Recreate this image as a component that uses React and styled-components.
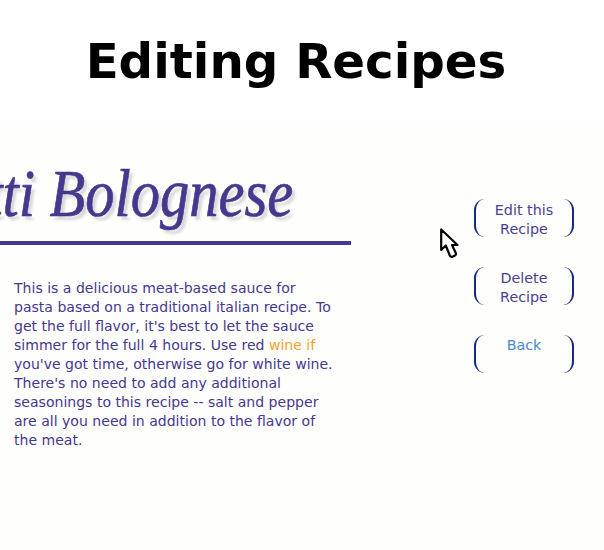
import styled, { createGlobalStyle } from "styled-components";

const GlobalStyle = createGlobalStyle`
  html, body {
    margin: 0;
    padding: 0;
    background: #ffffff;
  }
`;

const Page = styled.div`
  position: relative;
  width: 604px;
  height: 550px;
  overflow: hidden;
  font-family: "DejaVu Sans", Verdana, sans-serif;
`;

const Header = styled.header`
  height: 117px;
  background: #ffffff;
  display: flex;
  justify-content: center;
  box-sizing: border-box;
  padding: 32px 12px 0 0;
`;

const PageTitle = styled.h1`
  margin: 0;
  font-size: 48.3px;
  line-height: 58px;
  font-weight: 700;
  color: #000000;
`;

const Slide = styled.main`
  height: 433px;
  background: #fefefc;
  display: flex;
  justify-content: space-between;
`;

const Recipe = styled.section`
  width: 351px;
`;

const TitleBar = styled.div`
  height: 128px;
  box-sizing: border-box;
  padding-right: 58px;
  border-bottom: 4px solid #46388f;
  display: flex;
  justify-content: flex-end;
  align-items: flex-end;
  overflow: hidden;
`;

const RecipeName = styled.h2`
  margin: 0 0 3px;
  flex: none;
  white-space: nowrap;
  font-family: "Liberation Serif", serif;
  font-style: italic;
  font-weight: 400;
  font-size: 68px;
  line-height: 90px;
  color: #46388f;
  -webkit-text-stroke: 0.7px #46388f;
  text-shadow: 4px 4px 3px #d8d8d8;
  transform: scaleX(0.86);
  transform-origin: right center;
`;

const Description = styled.p`
  margin: 34px 0 0 14px;
  width: 322px;
  font-size: 14.05px;
  line-height: 19px;
  color: #46388f;
`;

const Highlight = styled.span`
  color: #f7a02c;
`;

const Actions = styled.nav`
  width: 100px;
  margin: 82px 30px 0 0;
  display: flex;
  flex-direction: column;
  gap: 30px;
`;

const ActionButton = styled.a`
  box-sizing: border-box;
  height: 38px;
  padding: ${(props) => (props.$single ? "1px" : "2px")} 8px 0;
  border-left: 2px solid #1a2a7c;
  border-right: 2px solid #1a2a7c;
  border-radius: 11px;
  text-align: center;
  font-size: 14.3px;
  line-height: 19px;
  color: ${(props) => props.color || "#4a3f90"};
`;

const Cursor = styled.svg`
  position: absolute;
  left: 440px;
  top: 228px;
`;

const App = () => {
  return (
    <Page>
      <GlobalStyle />
      <Header>
        <PageTitle>Editing Recipes</PageTitle>
      </Header>
      <Slide>
        <Recipe>
          <TitleBar>
            <RecipeName>Spaghetti Bolognese</RecipeName>
          </TitleBar>
          <Description>
            This is a delicious meat-based sauce for pasta based on a traditional italian recipe. To
            get the full flavor, it's best to let the sauce simmer for the full 4 hours. Use red{" "}
            <Highlight>wine if</Highlight> you've got time, otherwise go for white wine. There's no
            need to add any additional seasonings to this recipe -- salt and pepper are all you need
            in addition to the flavor of the meat.
          </Description>
        </Recipe>
        <Actions>
          <ActionButton>Edit this Recipe</ActionButton>
          <ActionButton>Delete Recipe</ActionButton>
          <ActionButton $single color="#4a86c8">
            Back
          </ActionButton>
        </Actions>
      </Slide>
      <Cursor width="20" height="31" viewBox="0 0 20 31">
        <path
          d="M1.2 1.5V22L5.8 17.5L9.8 27.5C10.5 29 12 29 13 28.5L15 27.5C16 27 16.2 26 15.8 25L12 17H17.5Z"
          fill="#ffffff"
          stroke="#000000"
          strokeWidth="2.2"
          strokeLinejoin="round"
        />
      </Cursor>
    </Page>
  );
};

export default App;
